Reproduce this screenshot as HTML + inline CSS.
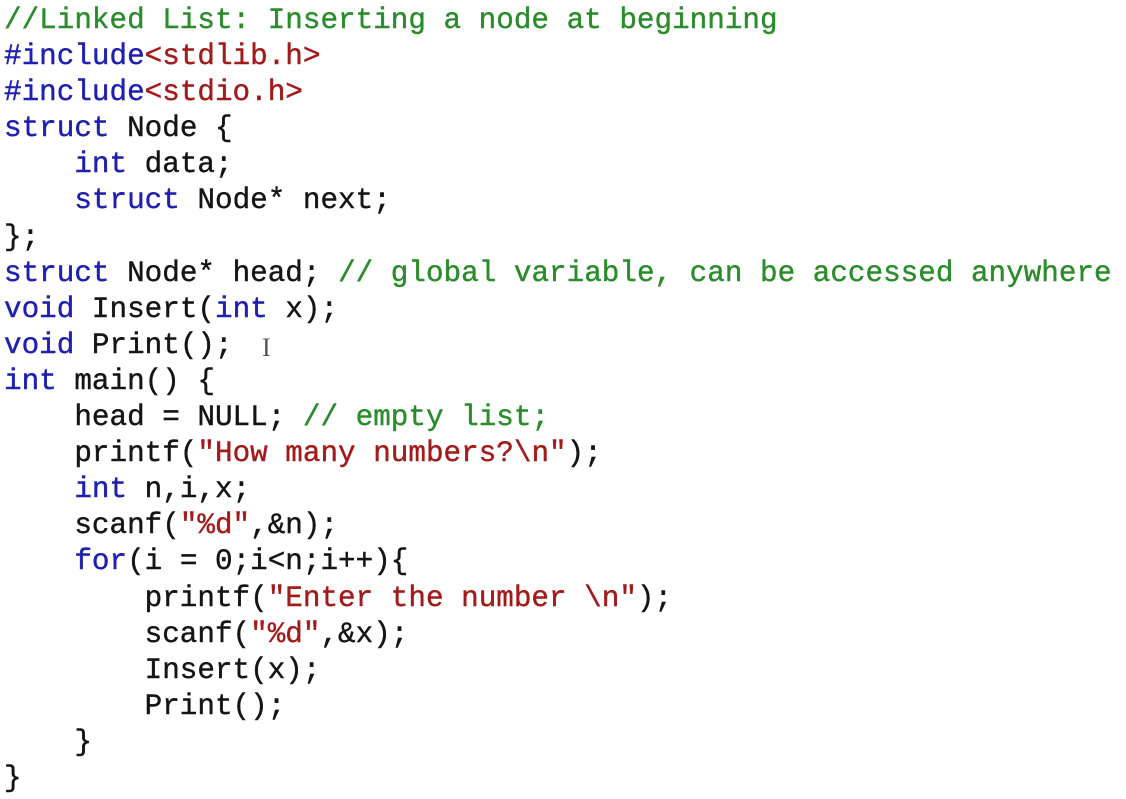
<!DOCTYPE html>
<html><head><meta charset="utf-8"><style>
html,body{margin:0;padding:0;background:#fff;width:1126px;height:799px;overflow:hidden}
pre{margin:0;position:absolute;left:4px;top:3px;font-family:"Liberation Mono",monospace;font-size:29.3px;line-height:36.1px;color:#141414;-webkit-text-stroke:0.4px currentColor}
.k{color:#1f20b0}.c{color:#2a8c2a}.s{color:#a31a1a}
.cur{position:absolute;left:262px;top:333px;font-family:"Liberation Serif",serif;font-size:26px;color:#555}
</style></head><body>
<pre><span class="c">//Linked List: Inserting a node at beginning</span>
<span class="k">#include</span><span class="s">&lt;stdlib.h&gt;</span>
<span class="k">#include</span><span class="s">&lt;stdio.h&gt;</span>
<span class="k">struct</span> Node {
    <span class="k">int</span> data;
    <span class="k">struct</span> Node* next;
};
<span class="k">struct</span> Node* head; <span class="c">// global variable, can be accessed anywhere</span>
<span class="k">void</span> Insert(<span class="k">int</span> x);
<span class="k">void</span> Print();
<span class="k">int</span> main() {
    head = NULL; <span class="c">// empty list;</span>
    printf(<span class="s">"How many numbers?\n"</span>);
    <span class="k">int</span> n,i,x;
    scanf(<span class="s">"%d"</span>,&amp;n);
    <span class="k">for</span>(i = 0;i&lt;n;i++){
        printf(<span class="s">"Enter the number \n"</span>);
        scanf(<span class="s">"%d"</span>,&amp;x);
        Insert(x);
        Print();
    }
}</pre>
<div class="cur">I</div>
</body></html>
